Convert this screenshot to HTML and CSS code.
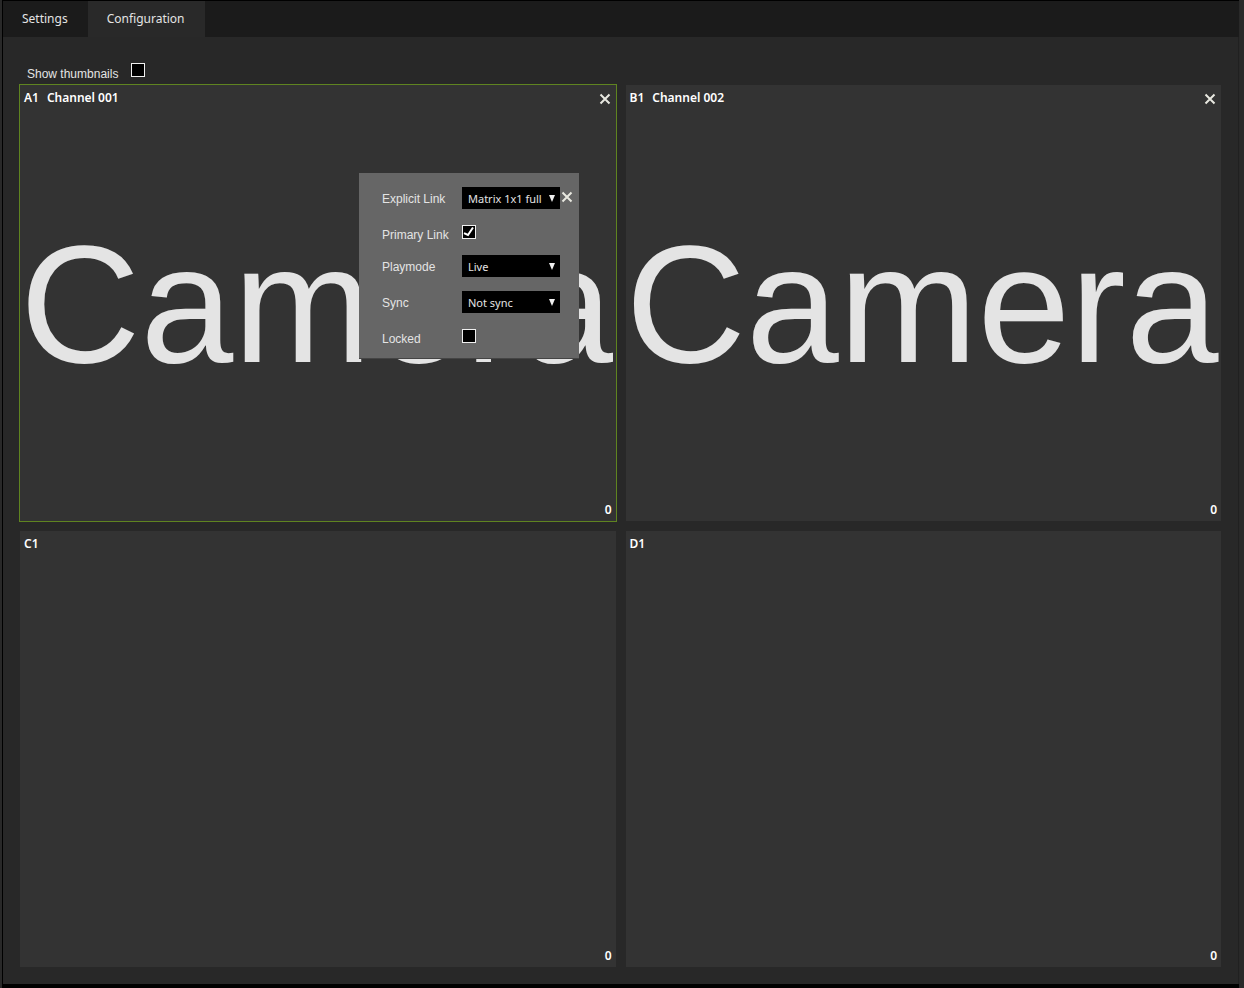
FILE: index.html
```html
<!DOCTYPE html>
<html lang="en">
<head>
<meta charset="utf-8">
<title>Configuration</title>
<link rel="stylesheet" href="styles.css">
</head>
<body>
<div class="app">
  <nav class="tabs">
    <button class="tab" type="button">Settings</button>
    <button class="tab active" type="button">Configuration</button>
  </nav>
  <main class="content">
    <div class="toolbar">
      <label for="thumbs">Show thumbnails</label>
      <input class="check" type="checkbox" id="thumbs">
    </div>
    <div class="matrix">
      <section class="tile selected">
        <header class="tile-head"><span>A1</span><span>Channel 001</span>
          <button class="close" type="button" aria-label="Remove channel 001"><svg viewBox="0 0 12 12"><path d="M1.5 1.5l9 9M10.5 1.5l-9 9"/></svg></button>
        </header>
        <div class="preview">Camera</div>
        <footer class="tile-foot">0</footer>
        <form class="popup">
          <div class="row">
            <label for="link">Explicit Link</label>
            <span class="select"><select id="link"><option>Matrix 1x1 full</option></select><svg viewBox="0 0 6 7"><path d="M0 0h6L3 7z"/></svg></span>
            <button class="close" type="button" aria-label="Close"><svg viewBox="0 0 12 12"><path d="M1.5 1.5l9 9M10.5 1.5l-9 9"/></svg></button>
          </div>
          <div class="row short">
            <label for="primary">Primary Link</label>
            <span class="tick"><input class="check" type="checkbox" id="primary" checked><svg viewBox="0 0 14 14"><path d="M2 8.2l4 1.8L11 2.5"/></svg></span>
          </div>
          <div class="row">
            <label for="playmode">Playmode</label>
            <span class="select"><select id="playmode"><option>Live</option></select><svg viewBox="0 0 6 7"><path d="M0 0h6L3 7z"/></svg></span>
          </div>
          <div class="row">
            <label for="sync">Sync</label>
            <span class="select"><select id="sync"><option>Not sync</option></select><svg viewBox="0 0 6 7"><path d="M0 0h6L3 7z"/></svg></span>
          </div>
          <div class="row short">
            <label for="locked">Locked</label>
            <input class="check" type="checkbox" id="locked">
          </div>
        </form>
      </section>
      <section class="tile">
        <header class="tile-head"><span>B1</span><span>Channel 002</span>
          <button class="close" type="button" aria-label="Remove channel 002"><svg viewBox="0 0 12 12"><path d="M1.5 1.5l9 9M10.5 1.5l-9 9"/></svg></button>
        </header>
        <div class="preview">Camera</div>
        <footer class="tile-foot">0</footer>
      </section>
      <section class="tile">
        <header class="tile-head"><span>C1</span></header>
        <div class="preview"></div>
        <footer class="tile-foot">0</footer>
      </section>
      <section class="tile">
        <header class="tile-head"><span>D1</span></header>
        <div class="preview"></div>
        <footer class="tile-foot">0</footer>
      </section>
    </div>
  </main>
</div>
</body>
</html>
```
FILE: styles.css
```css
* { box-sizing: border-box; }
body {
  margin: 0;
  background: #292929;
  color: #e4e4e4;
  font: 12px/16px "Noto Sans", sans-serif;
}
button, select { font: inherit; color: inherit; }
.app {
  display: flex;
  flex-direction: column;
  min-height: 100vh;
  margin: 0 5px 0 2px;
  border: solid #000;
  border-width: 1px 0 4px 1px;
  box-shadow: inset -1px 0 #202020;
}
.tabs {
  display: flex;
  height: 36px;
  background: #1b1b1b;
}
.tab {
  padding: 0 20px 1px 19px;
  border: 0;
  background: none;
}
.tab.active { background: #292929; }
.content {
  flex: 1;
  display: flex;
  flex-direction: column;
  padding: 24px 16px 16px;
  background: #282828;
  margin-right: 1px;
}
.toolbar {
  display: flex;
  align-items: flex-start;
  height: 23px;
  padding: 2px 8px 0;
  gap: 13px;
}
.toolbar label, .row label {
  font: 12px/14px "Liberation Sans", sans-serif;
}
.toolbar label { padding-top: 4px; }
.check {
  appearance: none;
  display: block;
  flex: none;
  width: 14px;
  height: 14px;
  margin: 0;
  border: 1px solid #f0f0f0;
  background: #000;
}
.matrix {
  flex: 1;
  display: grid;
  grid-template-columns: repeat(2, minmax(0, 1fr));
  grid-template-rows: repeat(2, 1fr);
  gap: 8px;
}
.tile {
  position: relative;
  display: flex;
  flex-direction: column;
  border: 1px solid transparent;
  background: #333 padding-box;
  container-type: inline-size;
  color: #fff;
  font-weight: 600;
}
.tile.selected { border-color: #5f8420; }
.tile-head {
  display: flex;
  gap: 8px;
  padding: 5px 5px 0 4px;
}
.close {
  display: block;
  width: 12px;
  height: 12px;
  padding: 0;
  border: 0;
  background: none;
}
.close svg { display: block; fill: none; stroke: #e8e8e0; stroke-width: 2; }
.tile-head .close { margin: 3px 0 0 auto; }
.preview {
  flex: 1;
  display: flex;
  align-items: center;
  color: #e4e4e4;
  font: 28cqw/1 "Liberation Sans", sans-serif;
}
.tile-foot { padding: 0 4px 3px; text-align: right; }
.popup {
  position: absolute;
  left: 339px;
  top: 88px;
  display: flex;
  flex-direction: column;
  gap: 14px;
  padding: 14px 6px 13px 23px;
  background: #666;
  box-shadow: 0 1px #444;
  color: #e4e4e4;
  font-weight: 400;
}
.row {
  display: grid;
  grid-template-columns: 80px 98px 13px;
  align-items: center;
  height: 22px;
}
.row label { padding-top: 2px; }
.row.short { height: 18px; align-items: start; padding-top: 2px; }
.row.short label { padding-top: 3px; }
.row .close { margin: 0 0 3px 1px; }
.select, .tick { position: relative; }
.select select {
  appearance: none;
  display: block;
  width: 100%;
  height: 22px;
  padding: 1px 0 0 6px;
  border: 0;
  border-radius: 0;
  background: #000;
  font-size: 11px;
}
.select svg {
  position: absolute;
  right: 5px;
  top: 8px;
  width: 6px;
  height: 7px;
  fill: #f0f0f0;
  pointer-events: none;
}
.tick svg {
  position: absolute;
  left: 0;
  top: 0;
  width: 14px;
  height: 14px;
  fill: none;
  stroke: #fff;
  stroke-width: 2;
  pointer-events: none;
}
```
